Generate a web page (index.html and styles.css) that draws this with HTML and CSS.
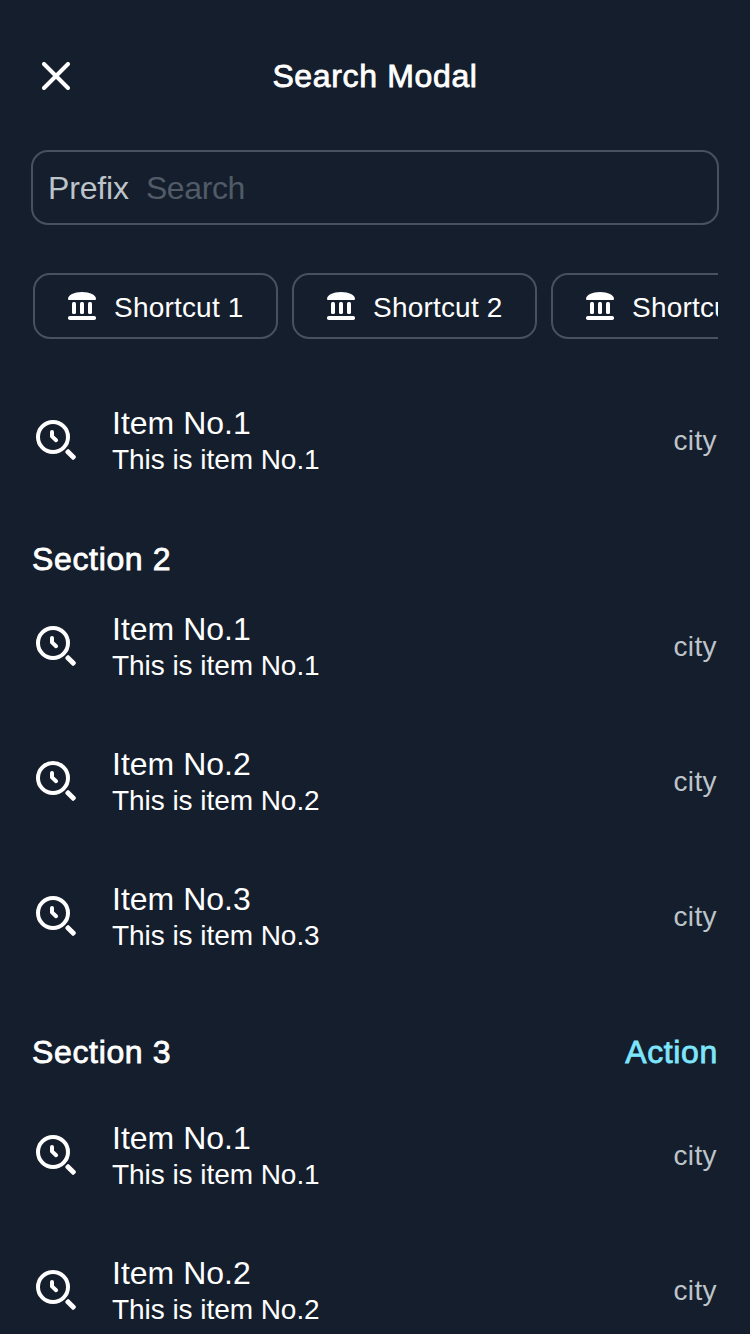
FILE: index.html
```html
<!DOCTYPE html>
<html lang="en">
<head>
<meta charset="utf-8">
<title>Search Modal</title>
<link rel="stylesheet" href="styles.css">
</head>
<body>
<svg class="defs" width="0" height="0" aria-hidden="true">
  <symbol id="history" viewBox="0 0 48 48">
    <circle cx="21" cy="21" r="15" fill="none" stroke="currentColor" stroke-width="4"/>
    <path d="M20 16v4.400l4.100 3.800" fill="none" stroke="currentColor" stroke-width="4" stroke-linecap="round" stroke-linejoin="round"/>
    <rect x="32.600" y="36" width="12" height="5" rx="1.700" transform="rotate(45 38.600 38.500)" fill="currentColor"/>
  </symbol>
  <symbol id="bank" viewBox="0 0 28 28">
    <path d="M0 7C0 3 6 0 14 0s14 3 14 7q0 1-1 1H1Q0 8 0 7z" fill="currentColor"/>
    <rect x="4" y="10" width="4" height="12" rx="1.5" fill="currentColor"/>
    <rect x="12" y="10" width="4" height="12" rx="1.5" fill="currentColor"/>
    <rect x="20" y="10" width="4" height="12" rx="1.5" fill="currentColor"/>
    <rect x="0" y="24" width="28" height="4" rx="1.8" fill="currentColor"/>
  </symbol>
</svg>
<main class="modal">
  <header class="header">
    <svg class="close" viewBox="0 0 28 28"><path d="M2 2l24 24M26 2L2 26" fill="none" stroke="currentColor" stroke-width="4" stroke-linecap="round"/></svg>
    <h1 class="title">Search Modal</h1>
  </header>
  <div class="search"><span class="prefix">Prefix</span><span class="placeholder">Search</span></div>
  <div class="shortcuts">
    <div class="shortcut"><svg class="bank"><use href="#bank"/></svg><span>Shortcut 1</span></div>
    <div class="shortcut"><svg class="bank"><use href="#bank"/></svg><span>Shortcut 2</span></div>
    <div class="shortcut"><svg class="bank"><use href="#bank"/></svg><span>Shortcut 3</span></div>
  </div>
  <section>
    <div class="row"><svg class="icon"><use href="#history"/></svg><div class="text"><div class="name">Item No.1</div><div class="sub">This is item No.1</div></div><span class="tag">city</span></div>
  </section>
  <section>
    <div class="heading"><h2 class="label">Section 2</h2></div>
    <div class="row"><svg class="icon"><use href="#history"/></svg><div class="text"><div class="name">Item No.1</div><div class="sub">This is item No.1</div></div><span class="tag">city</span></div>
    <div class="row"><svg class="icon"><use href="#history"/></svg><div class="text"><div class="name">Item No.2</div><div class="sub">This is item No.2</div></div><span class="tag">city</span></div>
    <div class="row"><svg class="icon"><use href="#history"/></svg><div class="text"><div class="name">Item No.3</div><div class="sub">This is item No.3</div></div><span class="tag">city</span></div>
  </section>
  <section>
    <div class="heading with-action"><h2 class="label">Section 3</h2><span class="action">Action</span></div>
    <div class="row"><svg class="icon"><use href="#history"/></svg><div class="text"><div class="name">Item No.1</div><div class="sub">This is item No.1</div></div><span class="tag">city</span></div>
    <div class="row"><svg class="icon"><use href="#history"/></svg><div class="text"><div class="name">Item No.2</div><div class="sub">This is item No.2</div></div><span class="tag">city</span></div>
  </section>
</main>
</body>
</html>
```
FILE: styles.css
```css
* { box-sizing: border-box; }
body {
  margin: 0;
  background: #151e2c;
  color: #fff;
  font-family: "Liberation Sans", Arial, sans-serif;
}
.defs { display: block; }
.modal {
  height: 1334px;
  padding: 0 32px;
  overflow: hidden;
}
.header {
  display: grid;
  grid-template-columns: 48px 1fr 48px;
  align-items: center;
  height: 150px;
  padding: 2px 0 0;
}
.close { width: 28px; height: 28px; margin-left: 10px; }
.title, .label, .action {
  margin: 0;
  font-size: 32px;
  font-weight: 400;
  line-height: 40px;
  letter-spacing: 0.65px;
  -webkit-text-stroke: 0.8px currentColor;
}
.title { text-align: center; }
.search {
  display: flex;
  align-items: center;
  gap: 17px;
  height: 75px;
  margin: 0 -1px;
  padding: 2px 15px 0;
  border: 2px solid #46525f;
  border-radius: 17px;
  font-size: 32px;
}
.prefix { color: #bdc4ca; letter-spacing: -0.15px; }
.placeholder { color: #505b67; letter-spacing: -0.4px; }
.shortcuts {
  display: flex;
  gap: 14px;
  margin-top: 48px;
  padding-left: 1px;
  overflow: hidden;
}
.shortcut {
  display: flex;
  flex: none;
  align-items: center;
  gap: 18px;
  width: 245px;
  height: 66px;
  padding: 4px 0 0 33px;
  border: 2px solid #46525f;
  border-radius: 17px;
  font-size: 28px;
  letter-spacing: 0.2px;
  white-space: nowrap;
}
.bank { width: 28px; height: 28px; margin-top: -4px; }
.shortcuts + section { margin-top: 34px; }
.row {
  display: flex;
  align-items: center;
  height: 135px;
}
.icon { width: 48px; height: 48px; margin: 0 32px 1px 0; }
.text { flex: 1; }
.name { font-size: 32px; line-height: 38px; }
.sub { margin-top: 1px; padding-bottom: 1px; font-size: 28px; line-height: 34px; letter-spacing: -0.05px; }
.tag { margin-right: 1px; font-size: 28px; letter-spacing: 0.4px; color: #bdc4ca; }
.heading {
  display: flex;
  justify-content: space-between;
  height: 71px;
  padding-top: 31px;
}
.with-action { height: 104px; padding-top: 48px; }
.action { color: #7de6fd; }
```
